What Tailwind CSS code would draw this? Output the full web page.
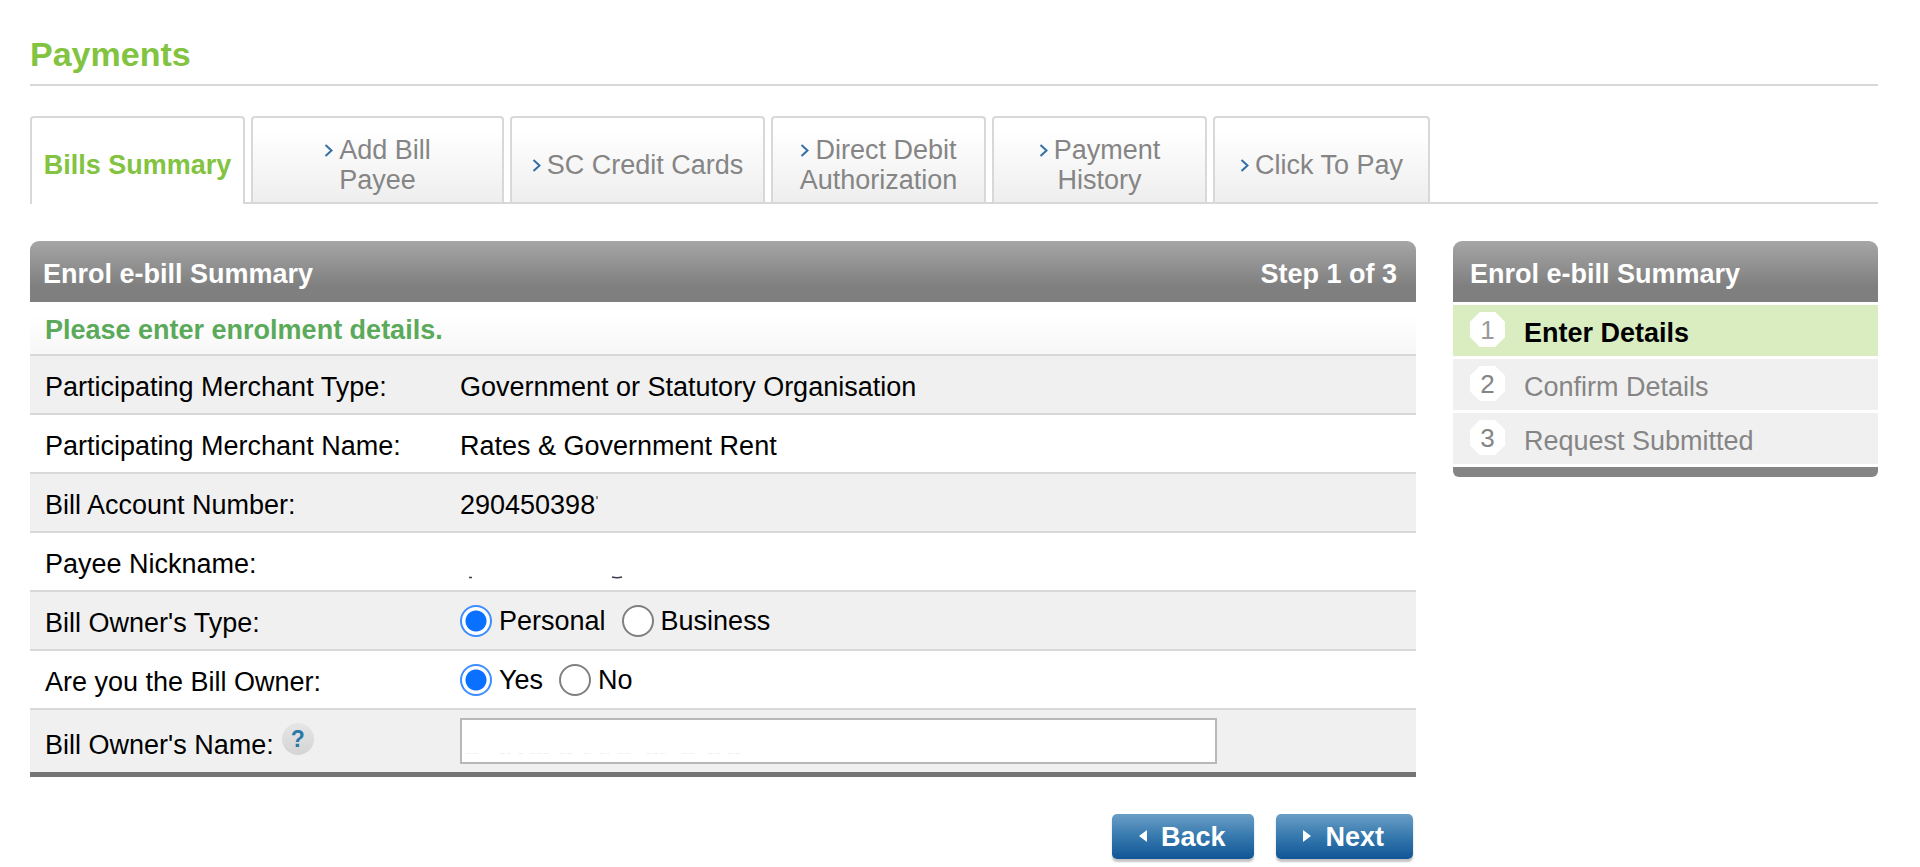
<!DOCTYPE html>
<html lang="en">
<head>
    <meta charset="UTF-8">
    <meta name="viewport" content="width=device-width, initial-scale=1.0">
    <title>Payments</title>
    <script src="https://cdn.jsdelivr.net/npm/@tailwindcss/browser@4"></script>
</head>
<body class="bg-white pt-[34px] pl-[30px] pr-[42px] pb-1 font-['Liberation_Sans',Arial,sans-serif] text-[27px] leading-[30px] text-black">
    <h1 class="mb-[30px] border-b-2 border-[#d8d8d8] pb-[10px] text-[34px] leading-[40px] font-bold text-[#82c341]">Payments</h1>

    <!-- Tabs -->
    <nav>
        <ul class="flex gap-[6px] border-b-2 border-[#d8d8d8] text-center text-[#858585]">
            <li class="-mb-[2px] w-[215px]">
                <a href="#" class="flex h-[88px] items-center justify-center rounded-t border-2 border-b-0 border-[#d8d8d8] bg-white pt-[8px] font-bold whitespace-nowrap text-[#82c341]">Bills Summary</a>
            </li>
            <li class="w-[253px]">
                <a href="#" class="flex h-[86px] items-center justify-center rounded-t border-2 border-b-0 border-[#d8d8d8] bg-linear-to-b from-white from-15% to-[#eeeeee] pt-[10px]">
                    <span><svg class="mr-[6px] mb-[2px] inline-block align-baseline" width="9" height="13" viewBox="0 0 9 13" fill="none" stroke="#336fa6" stroke-width="2"><path d="M1.500 1 7.500 6.500 1.500 12"/></svg>Add Bill<br>Payee</span>
                </a>
            </li>
            <li class="w-[255px]">
                <a href="#" class="flex h-[86px] items-center justify-center rounded-t border-2 border-b-0 border-[#d8d8d8] bg-linear-to-b from-white from-15% to-[#eeeeee] pt-[10px]">
                    <span><svg class="mr-[6px] mb-[2px] inline-block align-baseline" width="9" height="13" viewBox="0 0 9 13" fill="none" stroke="#336fa6" stroke-width="2"><path d="M1.500 1 7.500 6.500 1.500 12"/></svg>SC Credit Cards</span>
                </a>
            </li>
            <li class="w-[215px]">
                <a href="#" class="flex h-[86px] items-center justify-center rounded-t border-2 border-b-0 border-[#d8d8d8] bg-linear-to-b from-white from-15% to-[#eeeeee] pt-[10px]">
                    <span><svg class="mr-[6px] mb-[2px] inline-block align-baseline" width="9" height="13" viewBox="0 0 9 13" fill="none" stroke="#336fa6" stroke-width="2"><path d="M1.500 1 7.500 6.500 1.500 12"/></svg>Direct Debit<br>Authorization</span>
                </a>
            </li>
            <li class="w-[215px]">
                <a href="#" class="flex h-[86px] items-center justify-center rounded-t border-2 border-b-0 border-[#d8d8d8] bg-linear-to-b from-white from-15% to-[#eeeeee] pt-[10px]">
                    <span><svg class="mr-[6px] mb-[2px] inline-block align-baseline" width="9" height="13" viewBox="0 0 9 13" fill="none" stroke="#336fa6" stroke-width="2"><path d="M1.500 1 7.500 6.500 1.500 12"/></svg>Payment<br>History</span>
                </a>
            </li>
            <li class="w-[217px]">
                <a href="#" class="flex h-[86px] items-center justify-center rounded-t border-2 border-b-0 border-[#d8d8d8] bg-linear-to-b from-white from-15% to-[#eeeeee] pt-[10px]">
                    <span><svg class="mr-[6px] mb-[2px] inline-block align-baseline" width="9" height="13" viewBox="0 0 9 13" fill="none" stroke="#336fa6" stroke-width="2"><path d="M1.500 1 7.500 6.500 1.500 12"/></svg>Click To Pay</span>
                </a>
            </li>
        </ul>
    </nav>

    <div class="mt-[37px] flex items-start gap-[37px]">
        <main class="flex-1">
            <form>
                <div class="flex h-[61px] items-center justify-between rounded-t-[9px] bg-linear-to-b from-[#a6a6a6] to-[#7f7f7f] to-75% pt-[4px] pr-[19px] pl-[13px] font-bold text-white">
                    <h2>Enrol e-bill Summary</h2>
                    <span>Step 1 of 3</span>
                </div>
                <p class="h-[52px] bg-linear-to-b from-white from-25% to-[#f7f7f7] px-[15px] pt-[13px] font-bold text-[#5aaa5a]">Please enter enrolment details.</p>

                <table class="w-full table-fixed border-b-5 border-[#747474] text-left">
                    <tbody>
                        <tr class="h-[59px] border-t-2 border-[#d8d8d8] bg-[#f0f0f0]">
                            <th scope="row" class="w-[430px] pt-[4px] pl-[15px] font-normal">Participating Merchant Type:</th>
                            <td class="pt-[4px]">Government or Statutory Organisation</td>
                        </tr>
                        <tr class="h-[59px] border-t-2 border-[#d8d8d8]">
                            <th scope="row" class="pt-[4px] pl-[15px] font-normal">Participating Merchant Name:</th>
                            <td class="pt-[4px]">Rates &amp; Government Rent</td>
                        </tr>
                        <tr class="h-[59px] border-t-2 border-[#d8d8d8] bg-[#f0f0f0]">
                            <th scope="row" class="pt-[4px] pl-[15px] font-normal">Bill Account Number:</th>
                            <td class="pt-[4px]">290450398<span class="inline-block h-[18px] align-baseline"><span class="ml-[1px] block h-[3px] w-[2px] bg-[#8f8581]"></span></span></td>
                        </tr>
                        <tr class="h-[59px] border-t-2 border-[#d8d8d8]">
                            <th scope="row" class="pt-[4px] pl-[15px] font-normal">Payee Nickname:</th>
                            <td class="pt-[4px]">
                                <!-- Masked value, only the descenders show -->
                                <svg class="block" width="180" height="30" viewBox="0 0 180 30" fill="none" stroke="#3c3c50" stroke-width="1.500"><path d="M9 28.500h3"/><path d="M152 28q5 1.500 10 0"/></svg>
                            </td>
                        </tr>
                        <tr class="h-[59px] border-t-2 border-[#d8d8d8] bg-[#f0f0f0]">
                            <th scope="row" class="pt-[4px] pl-[15px] font-normal">Bill Owner's Type:</th>
                            <td>
                                <div class="flex items-center gap-[16px]">
                                    <label class="flex items-center gap-[7px]"><input type="radio" name="ownerType" checked class="size-[32px] appearance-none rounded-full border-2 border-[#808080] bg-white bg-clip-padding checked:border-[#3d8dff] checked:bg-[radial-gradient(circle,#0a70ff_10px,#ffffff_11px)]">Personal</label>
                                    <label class="flex items-center gap-[7px]"><input type="radio" name="ownerType" class="size-[32px] appearance-none rounded-full border-2 border-[#808080] bg-white bg-clip-padding checked:border-[#3d8dff] checked:bg-[radial-gradient(circle,#0a70ff_10px,#ffffff_11px)]">Business</label>
                                </div>
                            </td>
                        </tr>
                        <tr class="h-[59px] border-t-2 border-[#d8d8d8]">
                            <th scope="row" class="pt-[4px] pl-[15px] font-normal">Are you the Bill Owner:</th>
                            <td>
                                <div class="flex items-center gap-[16px]">
                                    <label class="flex items-center gap-[7px]"><input type="radio" name="isOwner" checked class="size-[32px] appearance-none rounded-full border-2 border-[#808080] bg-white bg-clip-padding checked:border-[#3d8dff] checked:bg-[radial-gradient(circle,#0a70ff_10px,#ffffff_11px)]">Yes</label>
                                    <label class="flex items-center gap-[7px]"><input type="radio" name="isOwner" class="size-[32px] appearance-none rounded-full border-2 border-[#808080] bg-white bg-clip-padding checked:border-[#3d8dff] checked:bg-[radial-gradient(circle,#0a70ff_10px,#ffffff_11px)]">No</label>
                                </div>
                            </td>
                        </tr>
                        <tr class="h-[65px] border-t-2 border-[#d8d8d8] bg-[#f0f0f0]">
                            <th scope="row" class="pt-[2px] pl-[15px] font-normal">
                                <div class="flex items-end gap-[8px]">
                                    <label for="ownerName">Bill Owner's Name:</label>
                                    <button type="button" aria-label="Help" class="mb-[5px] flex size-[32px] items-center justify-center rounded-full bg-linear-to-b from-[#e6e6e6] to-[#d4d4d4] text-[23px] leading-[24px] font-bold text-[#2a78a8]">?</button>
                                </div>
                            </th>
                            <td>
                                <div class="relative w-[757px] max-w-full">
                                    <input id="ownerName" type="text" class="block h-[46px] w-full border-2 border-[#b8b8b8] bg-white px-[4px]">
                                    <svg class="pointer-events-none absolute top-[34px] left-[6px]" width="280" height="3" viewBox="0 0 280 3" stroke="#f0f0f0" stroke-width="1"><path d="M0 1.500h12M34 1.500h10M52 1.500h6M64 1.500h20M94 1.500h12M118 1.500h8M134 1.500h10M152 1.500h14M180 1.500h22M216 1.500h14M242 1.500h12M262 1.500h14" stroke-dasharray="5 2"/></svg>
                                </div>
                            </td>
                        </tr>
                    </tbody>
                </table>

                <div class="mt-[37px] mr-[3px] flex justify-end gap-[22px] font-bold text-white">
                    <button type="button" class="flex h-[45px] items-center gap-[14px] rounded-[5px] bg-linear-to-b from-[#6a9ec6] via-[#3579ae] to-[#0f5596] pt-[2px] pr-[29px] pl-[27px] shadow-[0_3px_2px_#c4c4c4]">
                        <svg class="mb-[3px]" width="8" height="12" viewBox="0 0 8 12" fill="currentColor"><path d="M8 0v12L0 6z"/></svg>Back
                    </button>
                    <button type="submit" class="flex h-[45px] items-center gap-[14px] rounded-[5px] bg-linear-to-b from-[#6a9ec6] via-[#3579ae] to-[#0f5596] pt-[2px] pr-[29px] pl-[27px] shadow-[0_3px_2px_#c4c4c4]">
                        <svg class="mb-[3px]" width="8" height="12" viewBox="0 0 8 12" fill="currentColor"><path d="M0 0v12l8-6z"/></svg>Next
                    </button>
                </div>
            </form>
        </main>

        <!-- Progress steps -->
        <aside class="w-[425px]">
            <h2 class="flex h-[61px] items-center rounded-t-[9px] bg-linear-to-b from-[#a6a6a6] to-[#7f7f7f] to-75% px-[17px] pt-[4px] font-bold text-white">Enrol e-bill Summary</h2>
            <ol class="mt-[3px] flex flex-col gap-[3px] text-[#858585]">
                <li class="flex h-[51px] items-start gap-[19px] bg-[#d9edc0] px-[17px] pt-[7px]">
                    <span class="flex size-[35px] items-center justify-center bg-white text-[26px] text-[#9a9a9a] [clip-path:polygon(28%_0,72%_0,100%_28%,100%_72%,72%_100%,28%_100%,0_72%,0_28%)]">1</span>
                    <span class="pt-[6px] font-bold text-black">Enter Details</span>
                </li>
                <li class="flex h-[51px] items-start gap-[19px] bg-[#f0f0f0] px-[17px] pt-[7px]">
                    <span class="flex size-[35px] items-center justify-center bg-white text-[26px] [clip-path:polygon(28%_0,72%_0,100%_28%,100%_72%,72%_100%,28%_100%,0_72%,0_28%)]">2</span>
                    <span class="pt-[6px]">Confirm Details</span>
                </li>
                <li class="flex h-[51px] items-start gap-[19px] bg-[#f0f0f0] px-[17px] pt-[7px]">
                    <span class="flex size-[35px] items-center justify-center bg-white text-[26px] [clip-path:polygon(28%_0,72%_0,100%_28%,100%_72%,72%_100%,28%_100%,0_72%,0_28%)]">3</span>
                    <span class="pt-[6px]">Request Submitted</span>
                </li>
            </ol>
            <div class="mt-[3px] h-[10px] rounded-b-[6px] bg-[#858585]"></div>
        </aside>
    </div>
</body>
</html>
